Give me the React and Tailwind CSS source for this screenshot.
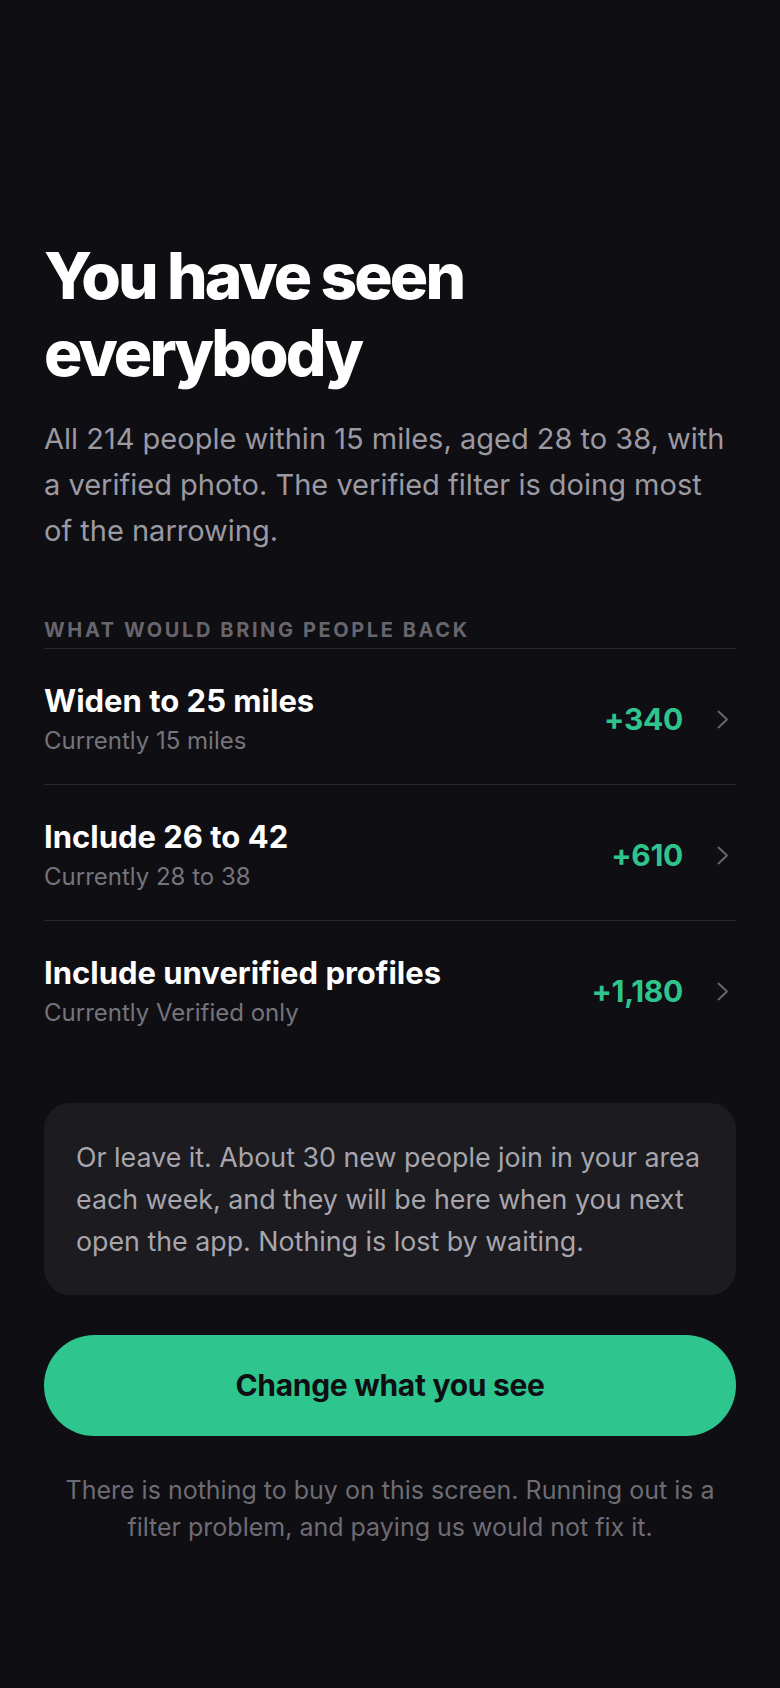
const options = [
  { title: "Widen to 25 miles", current: "Currently 15 miles", gain: "+340" },
  { title: "Include 26 to 42", current: "Currently 28 to 38", gain: "+610" },
  { title: "Include unverified profiles", current: "Currently Verified only", gain: "+1,180" },
];

function OptionRow({ title, current, gain, last }) {
  return (
    <button
      className={`w-full flex items-center text-left pt-[34px] pb-[28px] ${last ? "" : "border-b border-[#2a292f]"}`}
    >
      <div className="flex-1 min-w-0">
        <div className="text-[31px] leading-9 font-bold text-white">{title}</div>
        <div className="mt-[7px] text-[24px] leading-[30px] text-[#76747b]">{current}</div>
      </div>
      <span className="text-[30px] font-bold text-[#2fc48d] tracking-[-0.01em]">{gain}</span>
      <svg className="ml-[34px] mr-[7px]" width="12" height="19" viewBox="0 0 12 19" fill="none">
        <path d="M1.5 1.5L10 9.5L1.5 17.5" stroke="#6c6a71" strokeWidth="1.8" strokeLinecap="round" strokeLinejoin="round" />
      </svg>
    </button>
  );
}

export default function App() {
  return (
    <div className="min-h-screen bg-[#0f0e13] font-['Inter',sans-serif] px-11 pt-[237px] pb-24">
      {/* HEADLINE */}
      <h1 className="text-[64px] leading-[77px] font-extrabold text-white tracking-[-0.045em]">
        You have seen
        <br />
        everybody
      </h1>
      <p className="mt-[25px] text-[29px] leading-[46px] text-[#9b99a1]">
        All 214 people within 15 miles, aged 28 to 38, with a verified photo. The verified filter is doing most of the narrowing.
      </p>

      {/* OPTIONS */}
      <div className="mt-16 pb-[6px] border-b border-[#2a292f] text-[20px] leading-6 font-bold tracking-[0.13em] text-[#68666d] uppercase">
        What would bring people back
      </div>
      <div>
        {options.map((o, i) => (
          <OptionRow key={o.title} {...o} last={i === options.length - 1} />
        ))}
      </div>

      {/* NOTE */}
      <div className="mt-[47px] rounded-[26px] bg-[#1c1b20] pl-8 pr-6 py-[33px] text-[26.8px] leading-[42px] text-[#a8a6ad]">
        Or leave it. About 30 new people join in your area each week, and they will be here when you next open the app. Nothing is lost by waiting.
      </div>

      {/* CTA */}
      <button className="mt-10 w-full h-[101px] rounded-full bg-[#2fc58f] text-[30px] font-bold text-[#0f0e12] tracking-[-0.01em]">
        Change what you see
      </button>
      <p className="mt-[36px] px-4 text-center text-[25px] leading-[37px] text-[#6e6c73]">
        There is nothing to buy on this screen. Running out is a filter problem, and paying us would not fix it.
      </p>
    </div>
  );
}
